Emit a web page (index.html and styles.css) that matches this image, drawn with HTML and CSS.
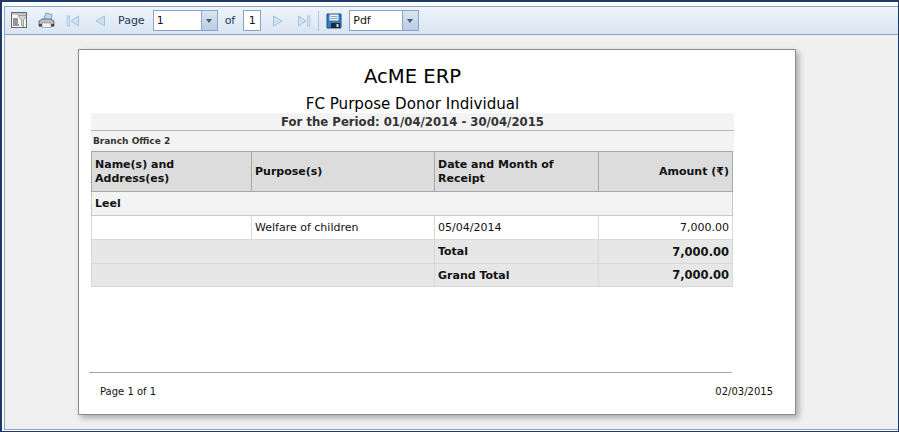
FILE: index.html
```html
<!DOCTYPE html>
<html lang="en">
<head>
    <meta charset="UTF-8">
    <title>AcME ERP - FC Purpose Donor Individual</title>
    <link rel="stylesheet" href="styles.css">
</head>
<body>
    <div class="frame">
        <div class="viewer">
            <div class="toolbar">
                <button class="tool tool-params" title="Parameters">
                    <svg width="17" height="17" viewBox="0 0 17 17">
                        <rect x="0.500" y="0.500" width="15" height="15" fill="#f8f8f5" stroke="#666"/>
                        <rect x="1" y="1" width="14" height="2" fill="#c4c6c1"/>
                        <path d="M2 7h5M2 9h5M2 11h5M2 13h6" stroke="#333"/>
                        <path d="M7 3.500h9l-3.500 4.500v6.500l-2-1V8z" fill="#d4d6cf" stroke="#7c7f78" stroke-width="0.700"/>
                    </svg>
                </button>
                <button class="tool tool-print" title="Print">
                    <svg width="17" height="17" viewBox="0 0 17 17">
                        <path d="M6 7l2-6 6 1.500L13 8z" fill="#bcdcf5" stroke="#5f8fb8" stroke-width="0.800"/>
                        <path d="M1 9l3-2h9l3 2v5H1z" fill="#b9bcc0" stroke="#55595e" stroke-width="0.800"/>
                        <path d="M1 12h15v2.500H1z" fill="#45484b"/>
                        <rect x="4" y="11" width="9" height="4.500" fill="#f2f2f2" stroke="#777" stroke-width="0.500"/>
                    </svg>
                </button>
                <button class="tool tool-first" title="First page">
                    <svg width="14" height="14" viewBox="0 0 14 14">
                        <rect x="1" y="2" width="2.500" height="10" fill="#cfe2f3" stroke="#a3c3df" stroke-width="0.800"/>
                        <path d="M12.500 2v10L5 7z" fill="#cfe2f3" stroke="#a3c3df"/>
                    </svg>
                </button>
                <button class="tool tool-prev" title="Previous page">
                    <svg width="12" height="14" viewBox="0 0 12 14">
                        <path d="M10.500 2v10L2 7z" fill="#cfe2f3" stroke="#a3c3df"/>
                    </svg>
                </button>
                <span class="tool-label label-page">Page</span>
                <div class="combo combo-page">
                    <span class="combo-value">1</span>
                    <span class="combo-arrow"></span>
                </div>
                <span class="tool-label label-of">of</span>
                <div class="page-count">1</div>
                <button class="tool tool-next" title="Next page">
                    <svg width="12" height="14" viewBox="0 0 12 14">
                        <path d="M1.500 2v10L10 7z" fill="#cfe2f3" stroke="#a3c3df"/>
                    </svg>
                </button>
                <button class="tool tool-last" title="Last page">
                    <svg width="14" height="14" viewBox="0 0 14 14">
                        <path d="M1.500 2v10L9 7z" fill="#cfe2f3" stroke="#a3c3df"/>
                        <rect x="10.500" y="2" width="2.500" height="10" fill="#cfe2f3" stroke="#a3c3df" stroke-width="0.800"/>
                    </svg>
                </button>
                <span class="separator"></span>
                <button class="tool tool-save" title="Export">
                    <svg width="16" height="16" viewBox="0 0 16 16">
                        <path d="M1 1h14v14H1z" fill="#2f7fc8" stroke="#1d4f86"/>
                        <rect x="3.500" y="1.500" width="9" height="6" fill="#eef1f3"/>
                        <path d="M4.500 3.500h7M4.500 5.500h7" stroke="#9aa3ab"/>
                        <rect x="5" y="10" width="9" height="5" fill="#24272b"/>
                        <rect x="10.500" y="11" width="2" height="3" fill="#ddd"/>
                    </svg>
                </button>
                <div class="combo combo-format">
                    <span class="combo-value">Pdf</span>
                    <span class="combo-arrow"></span>
                </div>
            </div>

            <div class="workspace">
                <div class="page">
                    <div class="report">
                        <h1 class="report-title">AcME ERP</h1>
                        <h2 class="report-subtitle">FC Purpose Donor Individual</h2>
                        <div class="report-period">For the Period: 01/04/2014 - 30/04/2015</div>
                        <div class="report-branch">Branch Office 2</div>
                        <table class="report-table">
                            <thead>
                                <tr>
                                    <th class="col-name">Name(s) and<br>Address(es)</th>
                                    <th class="col-purpose">Purpose(s)</th>
                                    <th class="col-date">Date and Month of<br>Receipt</th>
                                    <th class="col-amount num">Amount (₹)</th>
                                </tr>
                            </thead>
                            <tbody>
                                <tr class="group-row">
                                    <td colspan="4">Leel</td>
                                </tr>
                                <tr class="data-row">
                                    <td></td>
                                    <td>Welfare of children</td>
                                    <td>05/04/2014</td>
                                    <td class="num">7,000.00</td>
                                </tr>
                                <tr class="total-row">
                                    <td colspan="2"></td>
                                    <td>Total</td>
                                    <td class="num">7,000.00</td>
                                </tr>
                                <tr class="total-row">
                                    <td colspan="2"></td>
                                    <td>Grand Total</td>
                                    <td class="num">7,000.00</td>
                                </tr>
                            </tbody>
                        </table>
                    </div>
                    <div class="page-footer">
                        <span>Page 1 of 1</span>
                        <span>02/03/2015</span>
                    </div>
                </div>
            </div>
        </div>
    </div>
</body>
</html>
```

FILE: styles.css
```css
/* Page and outer frame */
html, body {
    height: 100%;
}

body {
    margin: 0;
    font-family: "DejaVu Sans", Tahoma, sans-serif;
    font-size: 11px;
    color: #111;
    background: #ffffff;
    overflow: hidden;
}

.frame {
    box-sizing: border-box;
    height: 432px;
    padding: 4px 0 1px 2px;
    border: solid #1f3a68;
    border-width: 2px 1px 1px 2px;
}

.viewer {
    box-sizing: border-box;
    height: 100%;
    display: flex;
    flex-direction: column;
    border: 1px solid #8aa3c7;
    border-right: none;
}

/* Toolbar */
.toolbar {
    box-sizing: border-box;
    height: 28px;
    display: flex;
    align-items: center;
    padding-left: 6px;
    background: linear-gradient(#eef4fb, #d9e5f3);
    border-bottom: 1px solid #8aa3c7;
}

.tool {
    display: flex;
    align-items: center;
    justify-content: center;
    padding: 0;
    border: none;
    background: none;
}

.tool-params { margin-right: 10px; }
.tool-print { margin-right: 11px; }
.tool-first { margin-right: 14px; }
.tool-prev { margin-right: 12px; }
.tool-next { margin: 0 13px 0 11px; }
.tool-last { margin-right: 7px; }
.tool-save { margin: 0 7px 0 7px; }

.tool-label {
    color: #1d3557;
    font-size: 11px;
}

.label-page { margin-right: 8px; }
.label-of { margin: 0 8px 0 7px; }

.combo {
    box-sizing: border-box;
    height: 21px;
    display: flex;
    background: #fff;
    border: 1px solid #8aa3c7;
}

.combo-page { width: 65px; }
.combo-format { width: 70px; }

.combo-value {
    flex: 1;
    padding-left: 3px;
    line-height: 19px;
    font-size: 11px;
}

.combo-arrow {
    width: 15px;
    position: relative;
    background: linear-gradient(#dbe5f2, #b9cce3);
    border-left: 1px solid #8aa3c7;
}

.combo-arrow::after {
    content: "";
    position: absolute;
    left: 4px;
    top: 8px;
    border: 3px solid transparent;
    border-top: 4px solid #4a5a70;
}

.page-count {
    box-sizing: border-box;
    width: 18px;
    height: 21px;
    line-height: 19px;
    text-align: center;
    background: #fff;
    border: 1px solid #8aa3c7;
}

.separator {
    width: 1px;
    height: 20px;
    background: #b4c4d8;
}

/* Report area */
.workspace {
    flex: 1;
    padding: 14px 0 0 73px;
    background: #f0f0f0;
}

.page {
    box-sizing: border-box;
    width: 718px;
    height: 366px;
    display: flex;
    flex-direction: column;
    background: #fff;
    border: 1px solid #8c8c8c;
    box-shadow: 3px 3px 6px rgba(0, 0, 0, 0.3);
}

.report {
    flex: 1;
    width: 643px;
    margin-left: 12px;
}

.report-title {
    margin: 15px 0 0;
    font-size: 19.6px;
    font-weight: normal;
    line-height: 24px;
    text-align: center;
    color: #000;
}

.report-subtitle {
    margin: 6px 0 0;
    font-size: 15.1px;
    font-weight: normal;
    line-height: 18px;
    text-align: center;
    color: #000;
}

.report-period {
    box-sizing: border-box;
    height: 18px;
    line-height: 19px;
    text-align: center;
    font-weight: bold;
    font-size: 11.7px;
    color: #333;
    background: #f3f3f3;
    border-bottom: 1px solid #b5b5b5;
}

.report-branch {
    box-sizing: border-box;
    height: 20px;
    padding-left: 2px;
    line-height: 21px;
    font-size: 9px;
    font-weight: bold;
    color: #333;
    background: #f3f3f3;
}

/* Table */
.report-table {
    width: 642px;
    table-layout: fixed;
    border-collapse: collapse;
    font-size: 11px;
}

.col-name { width: 160px; }
.col-purpose { width: 183px; }
.col-date { width: 164px; }

.report-table th {
    box-sizing: border-box;
    height: 40px;
    padding: 0 3px;
    text-align: left;
    line-height: 14px;
    font-size: 11px;
    background: #dcdcdc;
    border: 1px solid #a8a8a8;
}

.report-table td {
    box-sizing: border-box;
    height: 24px;
    padding: 0 3px;
    border: 1px solid #d8d8d8;
}

.report-table .num {
    text-align: right;
}

.group-row td {
    font-weight: bold;
    background: #f3f3f3;
    border-color: #c8c8c8;
}

.total-row td {
    font-weight: bold;
    background: #e7e7e7;
}

.total-row:last-child td {
    height: 23px;
}

.total-row .num {
    font-size: 11.5px;
}

/* Footer */
.page-footer {
    box-sizing: border-box;
    height: 42px;
    display: flex;
    justify-content: space-between;
    align-items: center;
    padding: 0 22px 4px 21px;
    font-size: 10px;
    position: relative;
}

.page-footer::before {
    content: "";
    position: absolute;
    left: 10px;
    top: 0;
    width: 643px;
    height: 1px;
    background: #a5a5a5;
}
```
